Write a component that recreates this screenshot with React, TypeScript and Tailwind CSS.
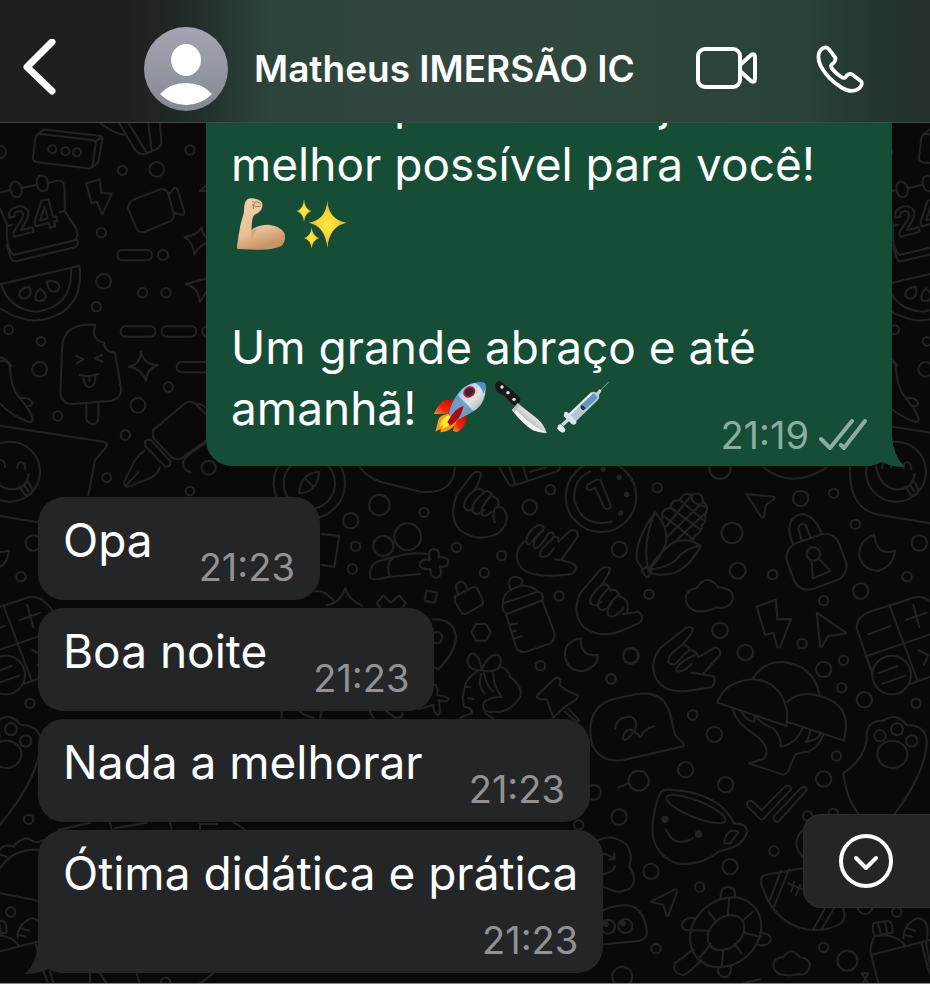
import { ReactNode } from "react"

type Dot = [number, number, number]

const incoming = [
  { text: "Opa", time: "21:23" },
  { text: "Boa noite", time: "21:23" },
  { text: "Nada a melhorar", time: "21:23" },
]

export default function App() {
  return (
    <div className="flex min-h-screen flex-col bg-[#090909] font-['Inter','Liberation_Sans',sans-serif] text-white">
      <ChatHeader />

      <main className="relative grid flex-1 overflow-hidden border-b border-[#8a8686]">
        <Wallpaper />

        <div className="col-start-1 row-start-1 flex min-w-0 flex-col items-start gap-2 px-[38px] pb-[9px]">
          {/* Outgoing message, scrolled partly under the header */}
          <section className="relative -mt-[68px] mb-[23px] w-full max-w-[686px] self-end rounded-[26px] bg-[#154d37] px-[25px] pt-[18px] pb-[11px]">
            <Tail className="absolute right-[-14px] bottom-[-1px] h-[31px] w-10 text-[#154d37]" />
            <p className="text-[46px] leading-[61px]">
              Todo o processo seja o <br />
              melhor possível para você!
              <br />
              <Biceps />
              <Sparkles />
              <br />
              <br />
              Um grande abraço e até
              <br />
              amanhã! <Rocket />
              <Knife />
              <Syringe />
            </p>
            <div className="-mt-6 flex items-center justify-end gap-[10px] text-[#8aae9f]">
              <time className="text-[38px] leading-10">21:19</time>
              <svg viewBox="0 0 48 32" className="h-8 w-12" fill="none" stroke="currentColor" strokeWidth="4" strokeLinecap="round" strokeLinejoin="round" role="img" aria-label="Lida">
                <path d="M2 20 L11 29 L33 2 M22 26 L25 29 L46 2" />
              </svg>
            </div>
          </section>

          {incoming.map((m) => (
            <section key={m.text} className="flex max-w-full items-end gap-[46px] rounded-[26px] bg-[#242527] px-[25px] py-[13px]">
              <p className="mb-4 text-[46px] leading-[61px]">{m.text}</p>
              <time className="text-[38px] leading-10 text-[#929294]">{m.time}</time>
            </section>
          ))}

          <section className="relative flex max-w-full flex-col gap-4 rounded-[26px] bg-[#242527] px-[25px] py-[13px]">
            <Tail className="absolute bottom-[-1px] left-[-14px] h-[31px] w-10 -scale-x-100 text-[#242527]" />
            <p className="text-[46px] leading-[61px]">Ótima didática e prática</p>
            <time className="self-end text-[38px] leading-10 text-[#929294]">21:23</time>
          </section>
        </div>

        <button aria-label="Ir para o fim" className="absolute right-0 bottom-[75px] flex h-[94px] w-[127px] items-center rounded-l-[18px] border border-r-0 border-[#2d2f2e] bg-[#242625] pl-[34px]">
          <svg viewBox="0 0 56 56" className="size-14" fill="none" stroke="currentColor" strokeWidth="4" strokeLinecap="round" strokeLinejoin="round">
            <circle cx="28" cy="28" r="25" />
            <path d="M18 25 L28 35 L38 25" />
          </svg>
        </button>
      </main>
    </div>
  )
}

function ChatHeader() {
  return (
    <header className="flex h-[123px] items-center border-b border-[#3c4b46] bg-[linear-gradient(to_right,#1f1f1f_14%,#212b27_20%,#2c443b_29%,#31463e_45%,#2f463d_68%,#294237_86%,#243630_94%,#26302c)] pt-4 pr-[66px] pl-5">
      <div className="flex h-full flex-1 items-center">
        <button aria-label="Voltar">
          <svg viewBox="0 0 38 60" className="h-[60px] w-[38px]" fill="none" stroke="currentColor" strokeWidth="7" strokeLinecap="round" strokeLinejoin="round">
            <path d="M32 3 L7 28 L32 52" />
          </svg>
        </button>
        <svg viewBox="0 0 86 86" className="ml-[85px] size-[86px]" role="img" aria-label="Foto do perfil">
          <defs>
            <linearGradient id="avatar" x1="0" y1="0" x2="0" y2="1">
              <stop offset="0" stopColor="#a3a6b1" />
              <stop offset="1" stopColor="#858995" />
            </linearGradient>
          </defs>
          <circle cx="43" cy="43" r="42" fill="url(#avatar)" />
          <ellipse cx="43" cy="34" rx="15" ry="16" fill="white" />
          <path d="M17 68 Q27 57 43 57 Q59 57 69 68 Q58 79 43 79 Q28 79 17 68 Z" fill="white" />
        </svg>
        <h1 className="ml-[25px] text-[37px] font-semibold whitespace-nowrap">Matheus IMERSÃO IC</h1>
      </div>
      <div className="flex items-center gap-[58px]">
        <button aria-label="Chamada de vídeo">
          <svg viewBox="0 0 62 44" className="h-11 w-[62px]" fill="none" stroke="currentColor" strokeWidth="4" strokeLinejoin="round">
            <rect x="2" y="2" width="42" height="38" rx="7" />
            <path d="M44 18 L55 8 Q59 6 59 10 V32 Q59 36 55 34 L44 24" />
          </svg>
        </button>
        <button aria-label="Chamada de voz">
          <svg viewBox="0 0 50 50" className="size-12" fill="none" stroke="currentColor" strokeWidth="4" strokeLinecap="round" strokeLinejoin="round">
            <path d="M5 5 Q10 0 14 5 L20 13 Q21 16 18 19 Q14 21 17 25 Q21 30 26 33 Q30 36 32 32 Q35 29 38 31 L46 37 Q50 40 45 45 Q38 51 26 44 Q12 35 5 22 Q0 11 5 5 Z" />
          </svg>
        </button>
      </div>
    </header>
  )
}

function Tail({ className }: { className: string }) {
  return (
    <svg viewBox="0 0 40 31" className={className} fill="currentColor" aria-hidden="true">
      <path d="M0 0 H26 Q27 20 39 31 Q25 31 16 26 Q9 30 0 30 Z" />
    </svg>
  )
}

function Emoji({ label, box, children }: { label: string; box: string; children: ReactNode }) {
  return (
    <svg viewBox={box} className="inline-block h-[52px] w-[62px] align-[-8px]" role="img" aria-label={label}>
      {children}
    </svg>
  )
}

function Biceps() {
  return (
    <Emoji label="💪🏼" box="93 57 186 156">
      <defs>
        <linearGradient id="skin" x1="0" y1="0" x2="0.3" y2="1">
          <stop offset="0" stopColor="#f3d3ad" />
          <stop offset="0.7" stopColor="#e8bf95" />
          <stop offset="1" stopColor="#c99468" />
        </linearGradient>
      </defs>
      <path d="M135 71 Q141 57 156 58 Q172 58 185 68 Q190 80 184 92 Q176 103 162 108 Q154 122 155 153 Q172 137 205 137 Q240 140 253 162 Q260 185 244 201 Q220 213 170 212 L113 210 Q109 206 112 195 Q116 165 122 135 L132 100 Q131 84 135 71 Z" fill="url(#skin)" />
      <path d="M157 68 Q163 72 172 68 L183 75 M156 78 Q166 84 183 82 M160 90 Q158 78 164 72" fill="none" stroke="#a87550" strokeWidth="3" />
      <path d="M155 153 Q151 176 160 181 Q158 166 172 150" fill="#d5a376" />
    </Emoji>
  )
}

function Sparkles() {
  return (
    <Emoji label="✨" box="279 60 186 156">
      <defs>
        <radialGradient id="gold">
          <stop offset="0" stopColor="#ffe94a" />
          <stop offset="0.5" stopColor="#fbd433" />
          <stop offset="1" stopColor="#e0a93a" />
        </radialGradient>
      </defs>
      <path d="M382 68 Q386 125 440 134 Q388 144 382 210 Q376 144 326 134 Q378 125 382 68 Z" fill="url(#gold)" />
      <path d="M312 64 Q314 94 334 99 Q315 105 312 132 Q309 105 290 99 Q310 94 312 64 Z" fill="url(#gold)" />
      <path d="M335 148 Q337 175 358 180 Q338 186 335 212 Q332 186 312 180 Q333 175 335 148 Z" fill="url(#gold)" />
    </Emoji>
  )
}

function Rocket() {
  return (
    <Emoji label="🚀" box="680 606 186 156">
      <defs>
        <linearGradient id="hull" x1="0" y1="0" x2="1" y2="1">
          <stop offset="0.1" stopColor="#3f79b8" />
          <stop offset="0.35" stopColor="#b8d5ee" />
          <stop offset="0.55" stopColor="#e2e5e4" />
          <stop offset="1" stopColor="#7f8b93" />
        </linearGradient>
        <linearGradient id="fin" x1="0" y1="1" x2="1" y2="0">
          <stop offset="0" stopColor="#ff9a1f" />
          <stop offset="0.4" stopColor="#f0260f" />
          <stop offset="1" stopColor="#b40d08" />
        </linearGradient>
      </defs>
      <path d="M755 660 L722 665 Q704 682 694 705 L738 704 Z" fill="url(#fin)" />
      <path d="M794 708 Q796 738 765 760 L752 756 L760 722 Z" fill="url(#fin)" />
      <path d="M737 704 Q712 708 708 722 Q704 742 699 758 Q710 751 716 751 L714 760 Q758 755 766 716 Z" fill="#ff9c16" />
      <path d="M738 709 Q716 718 712 744 L722 736 L720 750 Q744 742 752 718 Z" fill="#ffe838" />
      <path d="M848 612 Q800 605 772 638 Q748 666 740 704 L765 722 Q800 706 824 690 Q856 662 848 612 Z" fill="url(#hull)" />
      <path d="M848 612 Q834 609 819 613 Q838 621 844 646 Q850 632 848 612 Z" fill="#4c8fd2" />
      <path d="M765 648 L796 678 L813 697 Q790 710 765 722 L740 704 Q745 674 765 648 Z" fill="#4c82b8" opacity="0.7" />
      <ellipse cx="801" cy="639" rx="19" ry="16" transform="rotate(-35 801 639)" fill="#c91522" />
      <ellipse cx="801" cy="639" rx="13" ry="11" transform="rotate(-35 801 639)" fill="#272b33" />
      <path d="M784 681 Q758 686 735 730 L744 740 Q774 724 784 681 Z" fill="#a70d18" />
    </Emoji>
  )
}

function Knife() {
  return (
    <Emoji label="🔪" box="866 606 186 156">
      <defs>
        <linearGradient id="blade" x1="0" y1="1" x2="1" y2="0">
          <stop offset="0.3" stopColor="#8e9192" />
          <stop offset="0.5" stopColor="#cfd1d2" />
          <stop offset="0.7" stopColor="#f5f5f5" />
        </linearGradient>
      </defs>
      <path d="M879 624 Q876 608 894 606 L948 650 Q957 658 953 668 L946 676 Q936 682 929 674 L905 650 Q880 642 879 624 Z" fill="#17191c" />
      <path d="M946 673 L929 693 Q962 736 992 754 Q1012 762 1033 762 Q1025 736 1006 720 Z" fill="url(#blade)" />
      <path d="M929 693 Q962 736 992 754 Q1012 762 1033 762 L1020 754 Q985 738 936 687 Z" fill="#f0f1f1" />
      <path d="M929 693 L946 673 L953 678 L936 698 Z" fill="#b8bbbc" />
      <circle cx="899" cy="624" r="5" fill="#e7e9ea" />
      <circle cx="917" cy="641" r="5" fill="#e7e9ea" />
      <circle cx="935" cy="661" r="5" fill="#e7e9ea" />
    </Emoji>
  )
}

function Syringe() {
  return (
    <Emoji label="💉" box="1052 606 186 156">
      <path d="M1192 636 L1219 609" stroke="#8caaa5" strokeWidth="3" />
      <path d="M1178 646 L1192 630 L1198 635 L1186 654 Z" fill="#c7d8de" />
      <path d="M1094 708 L1166 640 Q1180 634 1190 648 Q1193 656 1186 664 L1116 732 Z" fill="#b3c9d1" />
      <path d="M1136 676 L1170 645 Q1182 645 1184 658 L1150 690 Z" fill="#5f98b8" />
      <path d="M1100 708 L1168 644" stroke="#eef5f7" strokeWidth="5" />
      <path d="M1134 680 Q1142 676 1150 688 L1144 694 Q1135 692 1134 680 Z" fill="#243943" />
      <path d="M1080 738 L1102 718" stroke="#d2dde1" strokeWidth="10" />
      <path d="M1086 700 Q1092 695 1098 702 L1122 727 Q1124 734 1116 737 Q1108 738 1104 731 L1084 711 Z" fill="#dbe4e7" />
      <path d="M1067 739 Q1074 732 1081 740 L1089 751 Q1090 760 1081 761 Q1067 756 1065 748 Z" fill="#e3eaed" />
    </Emoji>
  )
}

// Each patch of the wallpaper is drawn at three times its size
function Patch({ x, y, dots, children }: { x: number; y: number; dots: Dot[]; children: ReactNode }) {
  return (
    <g transform={`translate(${x} ${y}) scale(${1 / 3})`}>
      {dots.map(([cx, cy, r], i) => (
        <circle key={i} cx={cx} cy={cy} r={r} />
      ))}
      {children}
    </g>
  )
}

const topDots: Dot[] = [
  [0, 96, 18], [367, 151, 14], [470, 148, 22], [570, 90, 14], [304, 338, 14], [489, 405, 15], [311, 484, 22],
  [428, 518, 14], [498, 518, 14], [289, 560, 14], [26, 629, 13], [123, 664, 13], [119, 748, 22], [505, 801, 14],
  [414, 856, 22], [173, 888, 14], [376, 945, 14], [320, 1073, 13], [570, 1113, 13], [626, 1043, 21],
  [157, 88, 12], [196, 94, 12], [231, 97, 12], [30, 1055, 90],
]

const rightDots: Dot[] = [
  [52, 323, 14], [240, 265, 32], [482, 355, 23], [581, 340, 14], [276, 459, 31], [646, 433, 14], [838, 489, 23],
  [293, 572, 24], [398, 584, 14], [801, 590, 14], [662, 633, 23], [551, 662, 14], [27, 643, 14], [520, 522, 20],
]

const middleDots: Dot[] = [
  [298, 195, 31], [212, 242, 23], [432, 217, 14], [227, 319, 14], [217, 387, 14], [529, 322, 14], [665, 347, 14],
  [613, 398, 14], [811, 149, 14], [749, 202, 22], [1018, 328, 23], [837, 468, 14], [1052, 647, 23], [993, 717, 14],
  [781, 677, 14], [470, 593, 17], [383, 290, 40], [310, 318, 30], [88, 130, 77], [88, 130, 107], [963, 170, 106],
]

const bottomDots: Dot[] = [
  [480, 91, 23], [153, 237, 14], [556, 157, 23], [726, 131, 14], [791, 208, 23], [851, 181, 14], [845, 263, 14],
  [913, 299, 23], [1068, 310, 14], [398, 345, 14], [463, 403, 23], [377, 509, 23], [236, 542, 30], [497, 554, 23],
  [791, 537, 23], [829, 468, 14], [101, 577, 22], [177, 651, 23], [56, 675, 14], [642, 753, 14], [273, 814, 23],
  [510, 800, 23], [419, 861, 14], [288, 1046, 14], [187, 1130, 30], [862, 1082, 30], [791, 1042, 14], [1010, 936, 14],
  [915, 920, 22], [743, 648, 14], [820, 640, 14], [960, 407, 17], [1011, 388, 18], [1055, 423, 17], [995, 225, 58],
  [144, 980, 21], [196, 978, 21],
]

function Wallpaper() {
  return (
    <svg className="col-start-1 row-start-1 h-full w-full" aria-hidden="true">
      <defs>
        <pattern id="wallpaper" width="886" height="861" patternUnits="userSpaceOnUse">
          <g transform="translate(0 -123)">
            <g id="doodles" fill="none" stroke="#232324" strokeWidth="6" strokeLinecap="round" strokeLinejoin="round">
              <Patch x={0} y={120} dots={topDots}>
                {/* gift corner, box, calendar */}
                <path d="M300 8 Q340 42 380 45 M357 8 L402 85 Q415 105 435 102 L475 85 Q485 75 484 65 L480 8 M385 8 L440 98 M445 8 L455 95" />
                <path d="M122 42 L278 60 Q288 62 287 72 L278 135 Q275 147 262 145 L112 127 Q98 124 99 112 L106 55 Q110 40 122 42 M108 48 L128 30 Q132 28 140 29 L298 47 Q308 49 307 58 L296 122 Q293 132 272 144 M286 64 L304 52" />
                <ellipse cx="48" cy="208" rx="17" ry="24" transform="rotate(-12 48 208)" />
                <ellipse cx="127" cy="190" rx="17" ry="24" transform="rotate(-12 127 190)" />
                <path d="M0 218 L30 210 M66 204 L110 194 M146 188 L172 182 Q192 180 193 200 L195 275 L228 325 Q236 345 230 352 L233 372 M0 265 L22 315 Q15 380 40 405 L220 362 Q230 358 230 350 M20 375 Q30 410 36 422 Q42 425 50 423 L225 382 Q235 378 233 366 M22 318 L36 314 M178 277 L195 273" />
                <text x="36" y="352" fontSize="116" fontWeight="700" fontFamily="Inter, sans-serif" transform="rotate(-14 36 352)">24</text>
                <path d="M258 190 L300 178 L303 218 L335 221 L307 283 L290 245 L275 250 Z" />
                <path d="M398 240 L480 208 Q500 205 505 222 L522 285 Q522 298 510 304 L430 337 Q415 338 408 322 L384 265 Q384 250 398 240 M508 222 L524 203 Q530 202 533 210 L553 275 Q555 285 545 284 L522 278" />
                <rect x="352" y="390" width="104" height="31" rx="15" />
                <rect x="362" y="619" width="104" height="31" rx="15" />
                <rect x="485" y="619" width="104" height="31" rx="15" />
                <rect x="530" y="726" width="120" height="31" rx="15" />
                <rect x="607" y="619" width="104" height="31" rx="15" />
                <path d="M605 322 Q605 352 640 360 Q600 370 583 404 Q578 365 553 350 Q590 350 605 322 M423 696 Q433 735 474 735 Q440 745 438 782 Q425 745 386 740 Q420 735 423 696" />
                <path d="M640 470 L557 492 Q595 500 600 547 L640 480 M640 195 H620 L600 213 H640" />
                {/* watermelon */}
                <path d="M0 493 L238 437 Q250 530 190 575 Q100 632 0 565 M5 497 Q30 570 110 575 Q220 560 213 445" />
                <path d="M88 500 Q55 505 58 528 Q70 545 88 528 Q94 515 88 500 M120 505 Q100 525 108 540 Q125 550 137 532 Q138 520 120 505 M140 485 Q145 520 170 514 Q185 500 172 488 Q158 480 140 485" />
                {/* popsicle */}
                <path d="M286 615 Q186 605 186 690 L181 820 Q185 852 220 852 L335 842 Q365 835 363 805 L345 698 Q315 698 312 668 Q270 660 286 615 M259 852 V895 Q262 912 277 912 Q295 912 295 893 V848" />
                <path d="M228 708 L250 718 L230 730 M306 705 L285 715 L306 725 M240 766 Q268 772 295 762 M250 770 Q252 800 268 802 Q286 800 286 768 M268 772 V784" />
                <path d="M0 725 Q25 715 30 740 Q30 800 60 835 Q90 870 98 895 Q98 908 85 905 Q30 885 0 850 M60 835 Q90 830 97 850 Q95 862 75 856 M0 712 Q20 716 34 738" />
                {/* sticker with a smiley */}
                <path d="M0 917 L310 965 Q325 970 320 980 L285 1020 L265 1125" />
                <path d="M-12 1045 Q-10 1020 4 1020 Q16 1024 15 1042 M52 1045 Q52 1027 64 1027 Q76 1030 76 1048 M-30 1040 Q-15 1110 40 1108 Q80 1105 86 1062 M58 1100 L75 1125 Q95 1130 98 1110 L85 1085 M72 1096 L86 1114" />
                {/* fountain pen */}
                <path d="M640 905 L590 855 Q575 838 555 850 L460 930 Q453 950 470 965 L515 1012 Q530 1022 545 1015 L640 945 M585 852 Q605 850 615 862 M436 978 Q430 955 452 960 L512 1025 Q512 1042 495 1040 Z" />
                <path d="M433 992 Q400 1020 395 1040 L372 1085 Q370 1100 385 1100 L440 1078 Q470 1070 480 1042 M378 1096 L415 1057 M615 970 Q550 1010 548 1030 Q550 1050 570 1055" />
              </Patch>

              <Patch x={640} y={380} dots={rightDots}>
                <path d="M370 262 Q455 330 560 262 M630 262 Q625 390 720 405 L870 430" />
                {/* corn */}
                <path d="M45 397 Q85 440 78 490 Q60 540 25 570 Q5 490 45 397 M45 397 Q-15 480 -10 540 L8 568 M25 570 Q70 500 110 483 Q150 475 182 498 Q150 560 100 580 Q50 590 25 575 M25 570 Q100 560 120 525 Q150 500 182 498 M5 572 L18 560 L36 577 L20 593 Z" />
                <path d="M68 415 Q60 388 90 385 Q92 360 120 360 Q130 335 155 345 Q185 330 190 365 Q210 380 195 405 Q200 430 185 435 Q185 460 165 465 Q160 485 150 480 M72 408 L160 478 M95 385 L180 448 M120 360 L190 420 M155 345 Q150 370 195 380 M155 345 L78 440 M190 365 L82 470 M195 400 L110 480" />
                <path d="M320 343 L402 350 Q408 355 402 358 L378 375 L372 410 Q368 416 363 410 Z" />
                {/* padlock */}
                <rect x="447" y="472" width="165" height="146" rx="45" transform="rotate(-20 530 545)" />
                <path d="M458 490 Q430 420 480 403 Q520 400 545 460 M485 480 L475 445 Q480 425 497 435 L512 472 M515 542 L518 595 L572 573 L535 535" />
                <path d="M703 465 Q655 480 658 530 Q670 570 715 572 Q760 560 765 512 Q710 530 703 465" />
                <path d="M165 693 Q135 680 137 650 Q145 625 170 625 Q200 575 235 622 Q280 625 279 655 Q270 690 230 682 Q200 697 165 693" />
              </Patch>

              <Patch x={280} y={440} dots={middleDots}>
                <path d="M117 95 Q60 100 58 160 Q115 155 117 95 M75 115 L100 140 M240 82 Q260 110 300 125 L420 155 Q520 165 525 82" />
                {/* group */}
                <path d="M272 415 Q262 375 300 362 L340 352 Q400 335 440 342 M330 410 Q315 375 340 352 M272 415 Q280 422 330 410 L420 402" />
                <path d="M450 360 Q440 330 462 327 Q482 330 475 352 Q505 350 505 365 Q500 385 480 380 Q490 410 468 413 Q448 410 452 387 Q420 390 419 372 Q425 355 450 360" />
                {/* hands */}
                <path d="M585 150 Q605 110 602 98 Q590 88 575 105 L530 165 Q505 235 540 270 Q590 310 655 280 Q690 250 676 215 Q660 190 645 205 Q636 225 645 247 M585 150 Q550 175 552 200 Q560 220 580 205 M615 155 Q570 190 578 215 Q590 230 612 210 M635 165 Q600 200 605 222 Q615 235 635 215 M585 150 Q600 140 612 155 Q630 150 640 170 Q660 175 655 195" />
                <path d="M738 300 Q690 340 725 385 Q760 415 850 405 Q890 405 887 380 Q880 365 825 358 M845 358 L893 290 Q895 265 870 272 L835 305 M738 300 Q740 320 752 310 Q775 280 790 270 Q795 255 775 255 Q750 265 738 300 M790 270 Q750 310 765 325 Q780 325 805 280 Q830 270 815 300 Q775 330 780 348 Q800 360 822 325 M835 305 Q840 290 822 290" />
                <path d="M962 438 Q990 400 990 385 Q975 375 960 390 L900 460 Q875 520 910 560 Q960 600 1030 570 L1080 548 Q1095 530 1075 515 L1030 522 M962 438 Q925 470 932 490 Q945 505 965 485 M985 445 Q945 485 957 505 Q970 520 995 490 M1015 465 Q975 500 985 525 Q1000 540 1030 505 M962 438 Q985 425 990 450 Q1015 445 1018 470 Q1050 475 1042 515" />
                {/* baby bottle */}
                <path d="M690 445 Q680 410 708 410 Q735 415 725 432 M668 490 Q668 460 700 445 Q740 425 775 455 M668 490 L775 455 Q792 460 788 480 L682 522 Q665 515 668 490 M678 522 L708 620 Q715 640 740 635 L810 610 Q828 600 822 575 L788 485 M688 555 L712 550 M692 575 L708 572 M700 597 L725 588" />
                {/* clock */}
                <path d="M995 245 Q905 265 883 180 Q880 115 930 95" />
                <path d="M922 135 Q916 150 930 150 L946 144 L972 202 Q982 212 992 202 Q994 196 990 190 L962 122 Q956 116 948 120 Z" />
                <g fill="#232324" stroke="none">
                  <circle cx="970" cy="88" r="8" />
                  <circle cx="1018" cy="112" r="8" />
                  <circle cx="1040" cy="163" r="8" />
                  <circle cx="1022" cy="219" r="8" />
                </g>
                <path d="M658 82 L685 130 Q690 140 705 135 L830 95 Q840 90 840 82 M688 82 L705 130 M730 82 L742 120 M750 95 L800 82" />
                <path d="M525 470 L580 440 Q590 440 593 448 L608 480 Q612 490 602 497 L560 520 Q552 526 545 518 L525 485 Z M535 465 Q520 430 540 425 Q558 425 562 450" />
                <rect x="436" y="454" width="32" height="32" rx="4" transform="rotate(12 452 470)" />
                <path d="M588 552 H618 L632 577 L618 602 H588 L574 577 Z M459 538 Q520 535 528 590 Q525 640 475 688 L459 680" />
                <path d="M300 502 L290 490 L310 466 L333 488 L358 466 L377 490 L368 502 M140 495 Q180 490 196 445 Q205 480 247 497 M125 282 L178 287 L163 380 L125 375 M105 455 Q125 445 160 480" />
                <path d="M459 735 Q475 730 472 765 Q505 770 505 778 Q500 790 475 780 Q485 815 475 825 Q460 820 460 795 L415 808" />
                {/* girl with a bow */}
                <path d="M605 690 Q570 695 562 665 Q565 640 580 640 Q600 650 605 690 Q625 640 655 645 Q670 660 655 685 Q630 700 605 690 M660 680 Q690 690 690 710 Q730 740 720 770 Q690 820 640 815 Q605 820 610 790 Q625 770 665 770 M605 700 Q590 740 615 760 M590 695 Q555 720 555 740 L548 775 L552 800 Q580 805 575 820 L540 833 M555 740 L570 742 M565 775 L580 778 M640 700 Q640 740 665 770 M612 700 Q620 740 640 755 M615 820 L640 835" />
                {/* pushpin */}
                <path d="M825 715 Q835 710 842 720 L838 735 Q860 755 893 765 Q895 775 880 785 L855 800 L820 833 L800 778 Q765 780 772 765 Z M865 805 L897 840 Q895 848 885 842 L855 815" />
                <path d="M5 833 V815 M60 815 Q80 830 100 833 M125 815 L120 833 M270 815 L280 833 M320 815 L345 833 Q370 835 368 820" />
              </Patch>

              <Patch x={560} y={600} dots={bottomDots}>
                <circle cx="213" cy="168" r="23" />
                <path d="M175 563 L205 550 M62 115 Q10 125 15 170 Q25 215 70 213 Q115 200 113 165 Q60 170 62 115" />
                <path d="M648 0 L652 58 L693 57 L660 142 L652 142 L640 98 L615 105 L590 20 L645 0 M770 38 L858 98 Q858 102 850 102 L805 108 L785 140 Q780 142 780 135 Z" />
                <path d="M362 138 Q400 100 398 85 Q385 75 370 90 L300 145 Q265 190 290 240 Q320 285 400 270 L455 262 Q470 245 460 228 L395 218 M432 218 L480 165 Q485 145 465 142 L415 172 M362 138 Q325 160 325 185 Q335 200 350 188 Q365 170 385 152 M405 165 Q350 190 348 212 Q365 222 395 192 M362 138 Q380 130 390 150 Q410 152 415 172" />
                {/* speech bubble */}
                <path d="M150 300 L230 282 Q310 270 330 340 L345 405 L370 430 Q375 438 365 440 L190 480 Q120 490 95 430 Q75 330 150 300 M165 387 Q170 350 210 350 Q240 360 222 395 Q195 430 188 415 Q195 385 215 390 Q225 395 242 410 Q255 385 282 379" />
                {/* mushrooms */}
                <path d="M472 308 Q495 245 575 238 Q665 240 682 340 L680 378 Z M578 236 Q610 185 668 186 Q760 195 778 282 M682 305 Q720 270 780 288 Q860 310 858 380 L852 422 L684 366" />
                <path d="M518 328 Q530 370 580 400 Q640 445 610 478 L567 490 L670 524 Q685 520 690 500 L705 465 Q710 458 745 455 Q780 440 790 402 M590 352 Q610 375 640 385 Q665 410 662 440 Q710 430 727 385 M545 335 Q560 365 582 365 L585 348 M750 388 Q750 410 738 425 Q775 420 782 400" />
                {/* paw */}
                <path d="M895 640 Q860 600 850 520 Q910 480 920 420 Q915 360 970 362 Q1010 335 1040 375 Q1100 375 1100 430 Q1095 520 1005 640 L970 685" />
                <ellipse cx="997" cy="463" rx="45" ry="41" />
                {/* calculator */}
                <path d="M935 215 L890 85 Q890 50 930 35 L1040 0 Q1100 -30 1140 40 L1190 160 M988 15 L1072 240 M920 168 L1180 80 M925 103 L992 78 M1037 60 L1100 38 M1060 15 L1078 82 M955 220 L1012 198 M965 252 L1035 227 M1050 252 L1180 205 M1075 150 L1105 165 L1092 195" />
                {/* coffee cup */}
                <path d="M300 580 Q310 565 340 570 Q480 580 522 670 Q560 670 562 695 Q545 745 480 752 Q420 800 350 790 Q270 760 278 670 Q285 610 300 580 M318 688 Q340 745 398 715 M510 693 Q530 690 535 697 L510 730 L492 730 Q495 705 510 693" />
                <ellipse cx="408" cy="627" rx="95" ry="25" transform="rotate(22 408 627)" />
                <g fill="#232324" stroke="none">
                  <circle cx="315" cy="658" r="11" />
                  <circle cx="415" cy="702" r="11" />
                  <circle cx="137" cy="972" r="9" />
                  <circle cx="189" cy="970" r="9" />
                </g>
                <path d="M562 618 Q558 602 572 602 Q578 602 605 630 L675 560 Q692 550 693 568 L612 655 Q605 662 598 655 Z M640 650 L722 565 Q738 555 740 570 L658 662 Q642 672 640 650" />
                <path d="M115 720 Q160 700 200 735 Q220 760 208 800 Q235 840 210 865 Q180 880 160 872 L115 855 M115 765 Q140 755 163 778 M163 760 V778 H148 M165 798 Q160 820 115 825" />
                <path d="M115 940 Q150 915 200 916 Q250 920 260 990 Q265 1015 240 1022 L115 1035 M272 905 L345 868 Q352 868 350 878 L325 948 Q320 950 318 940 L310 915 Z" />
                {/* turtle */}
                <ellipse cx="497" cy="997" rx="115" ry="96" transform="rotate(-42 497 997)" />
                <ellipse cx="498" cy="998" rx="61" ry="45" transform="rotate(-40 498 998)" />
                <path d="M445 935 L470 965 M508 893 L503 945 M578 935 L548 962 M603 1010 L550 998 M545 1060 L523 1032 M485 1100 L490 1050 M420 1072 L452 1032 M390 990 L442 992 M482 897 Q480 860 505 860 Q530 865 524 892 M405 955 Q370 950 365 975 Q370 995 392 990 M603 1000 Q635 1000 632 1020 Q625 1040 595 1035 M475 1100 Q470 1130 495 1132 Q515 1125 513 1098 M400 1048 L345 1090 Q335 1120 370 1125 Q385 1120 425 1080" />
                {/* football */}
                <path d="M728 805 L615 825 Q600 830 603 850 Q640 970 740 988 Q800 995 840 972 Q860 960 850 925 M663 812 L628 905 M687 808 L642 920 M822 925 L785 988 M795 925 L762 985 M685 850 L728 868 M703 845 L693 875 M720 855 L708 885 M728 770 Q690 730 728 690" />
                <path d="M660 1123 Q635 1110 642 1085 Q655 1070 670 1072 Q695 1035 720 1072 Q755 1075 748 1105 Q735 1130 715 1122 Q690 1130 660 1123" />
                <path d="M940 970 L985 962 Q1000 970 997 998 L945 1008 Q935 990 940 970 M955 972 L962 1000 M975 966 L982 1000 M945 1008 Q925 1040 935 1070 L955 1150 M935 1065 L1110 1020 M945 1008 Q1000 1000 1030 1030 L1035 1040 M1030 1015 Q1030 975 1070 955 Q1105 955 1103 1000 L1100 1025 M1040 985 L1065 992 M1035 1005 L1055 1010 M1085 1030 L1105 1110 M1098 1028 L1112 1100 M905 1120 H925 L908 1150 M905 1120 L925 1150 M550 1150 L600 1138" />
              </Patch>

              <Patch x={0} y={800} dots={[[86, 58, 14], [497, 547, 14]]}>
                <path d="M0 150 Q10 130 40 140 Q75 100 100 125 Q115 130 130 120 M0 205 Q40 145 115 150 M0 280 L115 302 M0 165 Q20 165 25 180 M175 90 L270 68 M330 68 L335 88 M345 85 L440 68 M510 68 L515 88 M600 88 V72 H650 M700 68 Q720 75 735 90" />
                <path d="M130 515 L145 550 M150 515 L160 550 M270 520 V550 M300 520 L320 550 M410 520 L418 550 M600 550 L640 520" />
              </Patch>
            </g>
            <use href="#doodles" x="886" />
            <use href="#doodles" x="-886" />
          </g>
        </pattern>
      </defs>
      <rect width="100%" height="100%" fill="url(#wallpaper)" />
    </svg>
  )
}
